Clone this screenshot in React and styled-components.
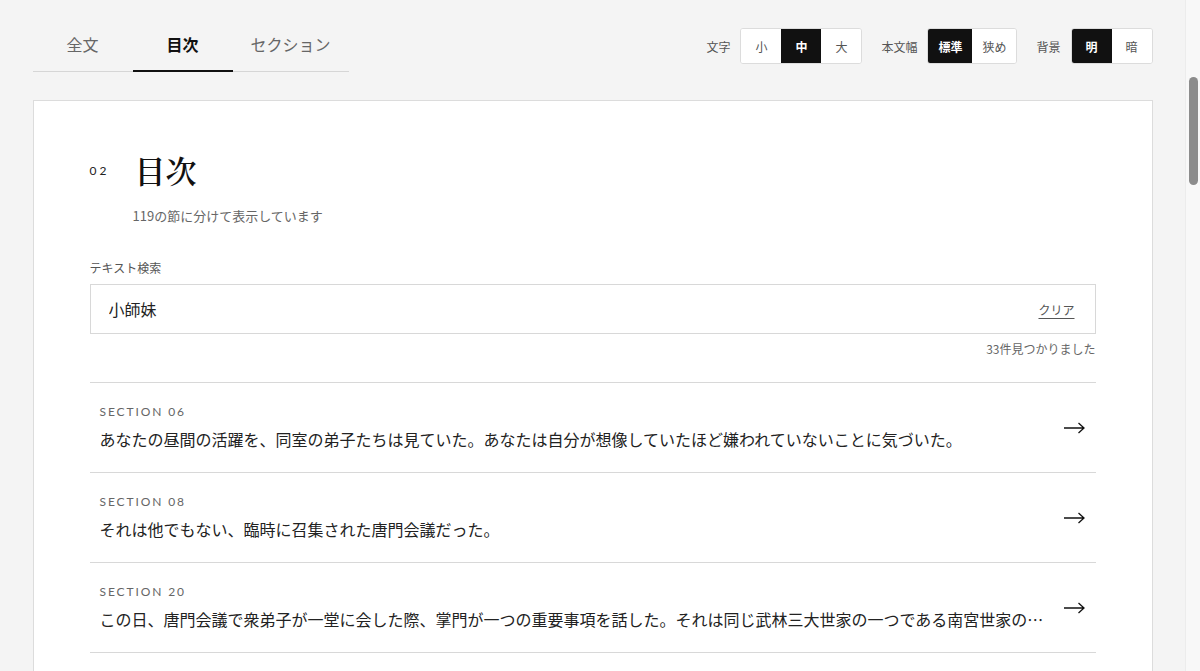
import React, { useState } from "react";
import styled, { createGlobalStyle } from "styled-components";

const GlobalStyle = createGlobalStyle`
  html, body {
    margin: 0;
    padding: 0;
    background: #f4f4f4;
  }
  body {
    font-family: Lato, "Noto Sans CJK JP", sans-serif;
    color: #222;
    padding-right: 15px; /* room for the window scrollbar */
  }
  * { box-sizing: border-box; }
`;

// stand-in for the browser's scrollbar, which headless rendering hides
const ScrollTrack = styled.div`
  position: fixed;
  top: 0;
  right: 0;
  width: 15px;
  height: 100vh;
  background: #f8f8f8;
  border-left: 1px solid #ececec;
`;

const ScrollThumb = styled.div`
  position: absolute;
  top: 77px;
  left: 3px;
  width: 9px;
  height: 108px;
  border-radius: 5px;
  background: #8c8c8c;
`;

const Page = styled.div`
  max-width: 1120px;
  margin: 0 auto;
  padding: 20px 0 2400px;
`;

const TopBar = styled.div`
  display: flex;
  align-items: center;
  justify-content: space-between;
`;

const Tabs = styled.nav`
  display: flex;
  border-bottom: 1px solid #d6d6d6;
`;

const Tab = styled.button`
  min-width: 100px;
  height: 52px;
  padding: 0 18px 2px;
  margin-bottom: -1px;
  background: none;
  border: none;
  border-bottom: 2px solid ${(p) => (p.active ? "#111" : "transparent")};
  font-family: "Noto Sans CJK JP", sans-serif;
  font-size: 16px;
  font-weight: ${(p) => (p.active ? 700 : 400)};
  color: ${(p) => (p.active ? "#111" : "#666")};
  cursor: pointer;
`;

const Controls = styled.div`
  display: flex;
  align-items: center;
  gap: 19px;
`;

const ControlGroup = styled.div`
  display: flex;
  align-items: center;
  gap: 10px;
`;

const ControlLabel = styled.span`
  font-family: "Noto Sans CJK JP", sans-serif;
  font-size: 12px;
  color: #555;
`;

const Segment = styled.div`
  display: flex;
  border: 1px solid #dcdcdc;
  border-radius: 3px;
  overflow: hidden;
  background: #fff;
`;

const SegButton = styled.button`
  min-width: 40px;
  height: 34px;
  padding: 0 10px;
  border: none;
  background: ${(p) => (p.active ? "#111" : "#fff")};
  color: ${(p) => (p.active ? "#fff" : "#555")};
  font-family: "Noto Sans CJK JP", sans-serif;
  font-size: 12px;
  font-weight: ${(p) => (p.active ? 700 : 400)};
  cursor: pointer;
`;

const Card = styled.section`
  margin-top: 28px;
  background: #fff;
  border: 1px solid #dcdcdc;
  padding: 49px 56px 40px;
`;

const Heading = styled.header`
  display: grid;
  grid-template-columns: 45px 1fr;
  align-items: center;
`;

const Number = styled.span`
  font-family: Lato, sans-serif;
  font-size: 12px;
  letter-spacing: 3px;
  color: #222;
`;

const Title = styled.h1`
  margin: 0;
  font-family: "Noto Serif CJK JP", "Liberation Serif", serif;
  font-size: 31px;
  font-weight: 600;
  line-height: 40px;
  color: #111;
`;

const Subtitle = styled.p`
  grid-column: 2;
  margin: 16px 0 0 -2px;
  font-family: "Noto Sans CJK JP", sans-serif;
  font-size: 13px;
  color: #666;
`;

const SearchLabel = styled.label`
  display: block;
  margin-top: 34px;
  font-family: "Noto Sans CJK JP", sans-serif;
  font-size: 12px;
  color: #555;
`;

const SearchBox = styled.div`
  display: flex;
  align-items: center;
  height: 50px;
  margin-top: 8px;
  padding: 0 20px 0 16px;
  border: 1px solid #d8d8d8;
`;

const SearchInput = styled.input`
  flex: 1;
  border: none;
  outline: none;
  font-family: "Noto Sans CJK JP", sans-serif;
  font-size: 16px;
  color: #222;
  background: transparent;
`;

const ClearLink = styled.button`
  background: none;
  border: none;
  padding: 0;
  font-family: "Noto Sans CJK JP", sans-serif;
  font-size: 12px;
  color: #555;
  text-decoration: underline;
  text-underline-offset: 3px;
  cursor: pointer;
`;

const Count = styled.p`
  margin: 6px 0 0;
  text-align: right;
  font-family: "Noto Sans CJK JP", sans-serif;
  font-size: 12px;
  color: #666;
`;

const List = styled.ul`
  list-style: none;
  margin: 25px 0 0;
  padding: 0;
  border-top: 1px solid #d8d8d8;
`;

const Item = styled.li`
  display: flex;
  align-items: center;
  gap: 20px;
  padding: 21px 10px 21px;
  border-bottom: 1px solid #d8d8d8;
  cursor: pointer;
`;

const ItemText = styled.div`
  flex: 1;
  min-width: 0;
`;

const SectionTag = styled.div`
  font-family: Lato, sans-serif;
  font-size: 12px;
  line-height: 16px;
  letter-spacing: 1.9px;
  color: #666;
`;

const ItemTitle = styled.div`
  margin-top: 7px;
  font-family: "Noto Sans CJK JP", sans-serif;
  font-size: 16px;
  line-height: 24px;
  color: #222;
  white-space: nowrap;
  overflow: hidden;
  text-overflow: ellipsis;
`;

const Arrow = styled.svg`
  flex: none;
  width: 21px;
  height: 12px;
  margin-right: 1px;
`;

const results = [
  {
    section: "SECTION 06",
    title:
      "あなたの昼間の活躍を、同室の弟子たちは見ていた。あなたは自分が想像していたほど嫌われていないことに気づいた。",
  },
  {
    section: "SECTION 08",
    title: "それは他でもない、臨時に召集された唐門会議だった。",
  },
  {
    section: "SECTION 20",
    title:
      "この日、唐門会議で衆弟子が一堂に会した際、掌門が一つの重要事項を話した。それは同じ武林三大世家の一つである南宮世家の令嬢との縁談についてであった。",
  },
];

function Segmented({ options, value }) {
  return (
    <Segment>
      {options.map((o) => (
        <SegButton key={o} active={o === value}>
          {o}
        </SegButton>
      ))}
    </Segment>
  );
}

export default function App() {
  const [query, setQuery] = useState("小師妹");

  return (
    <>
      <GlobalStyle />
      <Page>
        <TopBar>
          <Tabs>
            <Tab>全文</Tab>
            <Tab active>目次</Tab>
            <Tab>セクション</Tab>
          </Tabs>
          <Controls>
            <ControlGroup>
              <ControlLabel>文字</ControlLabel>
              <Segmented options={["小", "中", "大"]} value="中" />
            </ControlGroup>
            <ControlGroup>
              <ControlLabel>本文幅</ControlLabel>
              <Segmented options={["標準", "狭め"]} value="標準" />
            </ControlGroup>
            <ControlGroup>
              <ControlLabel>背景</ControlLabel>
              <Segmented options={["明", "暗"]} value="明" />
            </ControlGroup>
          </Controls>
        </TopBar>

        <Card>
          <Heading>
            <Number>02</Number>
            <Title>目次</Title>
            <Subtitle>119の節に分けて表示しています</Subtitle>
          </Heading>

          <SearchLabel>テキスト検索</SearchLabel>
          <SearchBox>
            <SearchInput value={query} onChange={(e) => setQuery(e.target.value)} />
            <ClearLink onClick={() => setQuery("")}>クリア</ClearLink>
          </SearchBox>
          <Count>33件見つかりました</Count>

          <List>
            {results.map((r) => (
              <Item key={r.section}>
                <ItemText>
                  <SectionTag>{r.section}</SectionTag>
                  <ItemTitle>{r.title}</ItemTitle>
                </ItemText>
                <Arrow viewBox="0 0 21 12" fill="none" stroke="#111" strokeWidth="1.3">
                  <path d="M0 6h20M14.5 1l5.5 5-5.5 5" />
                </Arrow>
              </Item>
            ))}
          </List>
        </Card>
      </Page>
      <ScrollTrack aria-hidden="true">
        <ScrollThumb />
      </ScrollTrack>
    </>
  );
}
